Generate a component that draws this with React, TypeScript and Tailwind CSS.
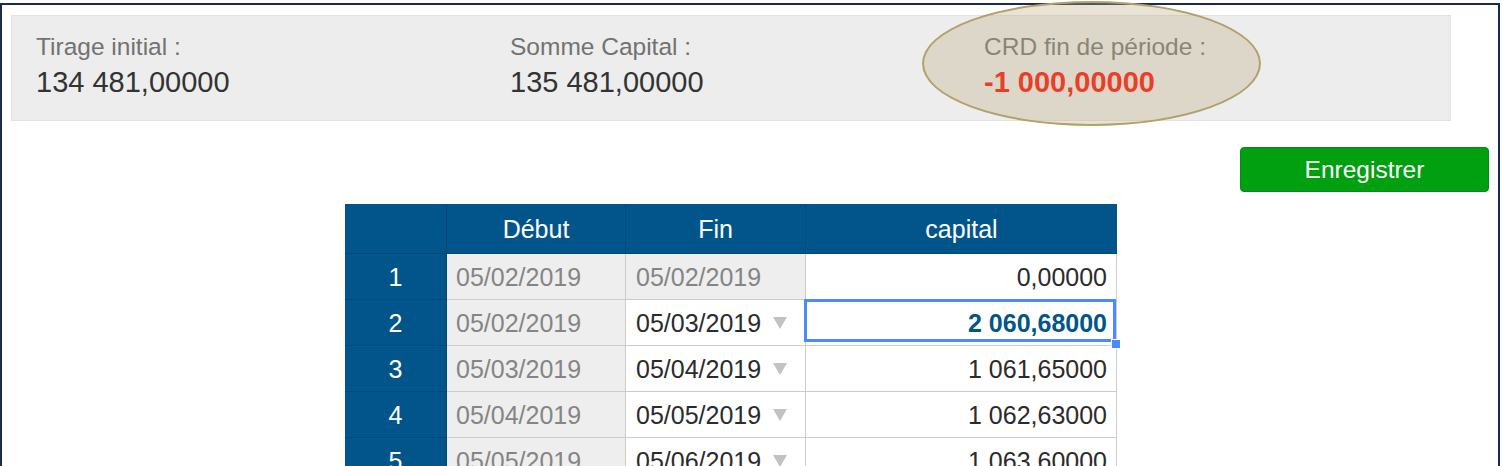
import React from "react";

type Row = { n: number; debut: string; fin: string; finRO?: boolean; cap: string; selected?: boolean };

const rows: Row[] = [
  { n: 1, debut: "05/02/2019", fin: "05/02/2019", finRO: true, cap: "0,00000" },
  { n: 2, debut: "05/02/2019", fin: "05/03/2019", cap: "2 060,68000", selected: true },
  { n: 3, debut: "05/03/2019", fin: "05/04/2019", cap: "1 061,65000" },
  { n: 4, debut: "05/04/2019", fin: "05/05/2019", cap: "1 062,63000" },
  { n: 5, debut: "05/05/2019", fin: "05/06/2019", cap: "1 063,60000" },
  { n: 6, debut: "05/06/2019", fin: "05/07/2019", cap: "1 064,58000" },
];

function Arrow() {
  return (
    <svg width="14" height="12" viewBox="0 0 14 12" className="shrink-0">
      <polygon points="0,0 14,0 7,12" fill="#c2c2c2" />
    </svg>
  );
}

function Stat({ label, value, red }: { label: string; value: string; red?: boolean }) {
  return (
    <div className="w-[474px] shrink-0 flex flex-col">
      <div className="text-[24.5px] leading-[31px] text-[#727272] whitespace-nowrap">{label}</div>
      <div
        className={
          red
            ? "mt-[2px] text-[29px] leading-[36px] font-bold text-[#ff0a00] whitespace-nowrap"
            : "mt-[2px] text-[29px] leading-[36px] text-[#333333] whitespace-nowrap"
        }
      >
        {value}
      </div>
    </div>
  );
}

export default function App() {
  return (
    <div className="relative w-[1502px] h-[466px] overflow-hidden bg-white pt-[3px] font-['Liberation_Sans',Arial,sans-serif]">
      <div className="w-[1500px] min-h-[700px] border-2 border-[#1b2a55] flex flex-col">
        {/* Summary panel */}
        <div className="ml-[9px] mt-[10px] w-[1440px] h-[106px] bg-[#ededed] border border-[#e2e2e2] pl-[24px] pt-[15px] flex overflow-hidden">
          <Stat label="Tirage initial :" value="134 481,00000" />
          <Stat label="Somme Capital :" value="135 481,00000" />
          <Stat label="CRD fin de période :" value="-1 000,00000" red />
        </div>

        {/* Save button */}
        <div className="mt-[26px] flex justify-end pr-[9px]">
          <button className="w-[249px] h-[45px] bg-[#00a010] border border-[#08891a] rounded-[4px] text-white text-[24.5px] leading-none flex items-center justify-center pt-[2px]">
            Enregistrer
          </button>
        </div>

        {/* Table */}
        <div className="ml-[343px] mt-[12px] w-[772px] grid grid-cols-[102px_179px_180px_311px] text-[25px] leading-[28px]">
          {/* header */}
          <div className="h-[50px] bg-[#02558a] border-r border-b border-[#034775]" />
          <div className="h-[50px] bg-[#02558a] border-r border-b border-[#034a7a] text-white flex items-center justify-center">
            Début
          </div>
          <div className="h-[50px] bg-[#02558a] border-r border-b border-[#034a7a] text-white flex items-center justify-center">
            Fin
          </div>
          <div className="h-[50px] bg-[#02558a] border-b border-[#034a7a] text-white flex items-center justify-center">
            capital
          </div>

          {rows.map((r) => (
            <React.Fragment key={r.n}>
              <div className="h-[46px] bg-[#02558a] border-r border-b border-[#034775] text-white flex items-center justify-center">
                {r.n}
              </div>
              <div className="h-[46px] bg-[#eeeeee] border-r border-b border-[#cccccc] text-[#858585] flex items-center pl-[9px]">
                {r.debut}
              </div>
              {r.finRO ? (
                <div className="h-[46px] bg-[#eeeeee] border-r border-b border-[#cccccc] text-[#858585] flex items-center pl-[10px]">
                  {r.fin}
                </div>
              ) : (
                <div className="h-[46px] bg-white border-r border-b border-[#cccccc] text-[#2b2b2b] flex items-center justify-between pl-[10px] pr-[18px]">
                  <span>{r.fin}</span>
                  <Arrow />
                </div>
              )}
              <div
                className={
                  r.selected
                    ? "relative z-10 h-[46px] bg-white border-r border-b border-[#cccccc] text-[#02558a] font-bold flex items-center justify-end pr-[9px]"
                    : "h-[46px] bg-white border-r border-b border-[#cccccc] text-[#2b2b2b] flex items-center justify-end pr-[9px]"
                }
              >
                {r.cap}
                {r.selected && (
                  <>
                    <div className="absolute left-[-2px] top-[-1px] right-[0px] bottom-[3px] border-[3px] border-[#4b89ff] pointer-events-none" />
                    <div className="absolute right-[-5px] bottom-[-4px] w-[10px] h-[10px] bg-[#4b89ff] border-[1.5px] border-white" />
                  </>
                )}
              </div>
            </React.Fragment>
          ))}
        </div>
      </div>

      {/* Highlight ellipse annotation */}
      <div className="absolute z-20 left-[922px] top-[1px] w-[339px] h-[125px] rounded-[50%] border-2 border-[#b3a06a] bg-[rgba(189,171,129,0.33)] pointer-events-none" />
    </div>
  );
}
